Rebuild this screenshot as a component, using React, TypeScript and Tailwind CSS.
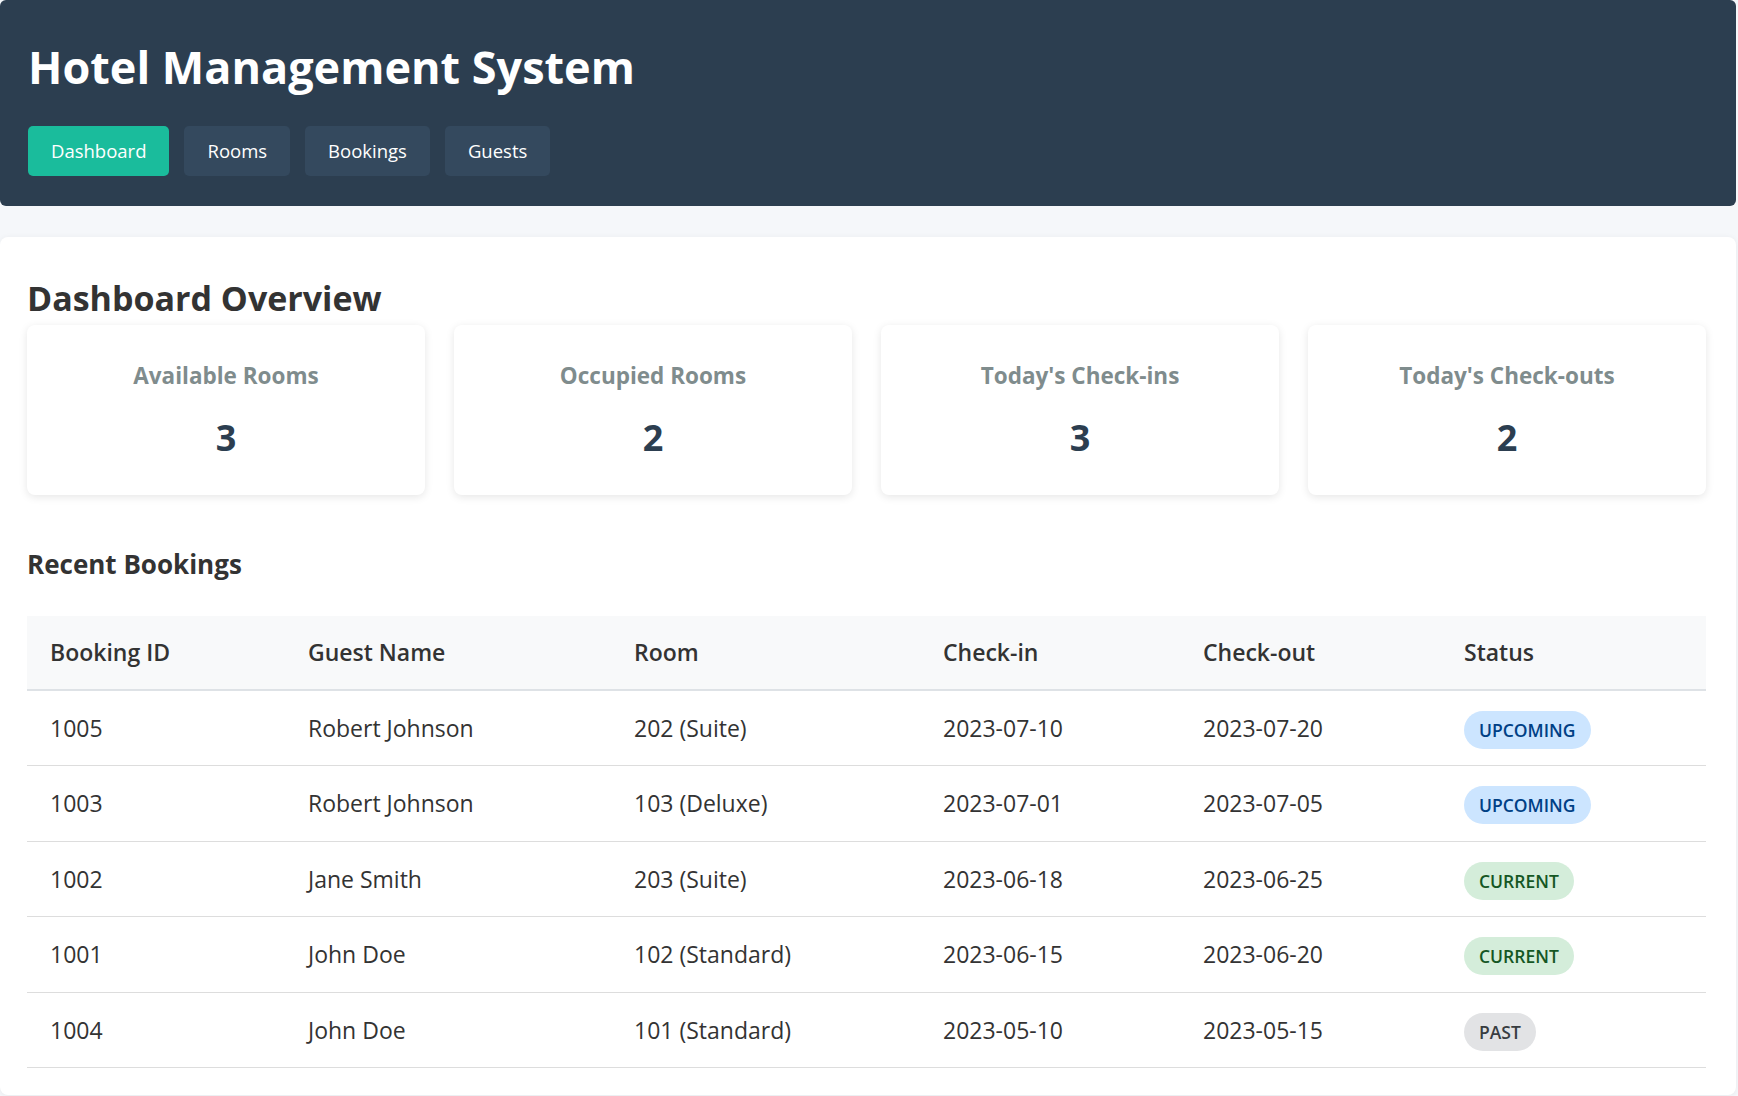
import React from "react";

const tabs = ["Dashboard", "Rooms", "Bookings", "Guests"];

const stats = [
  { label: "Available Rooms", value: 3 },
  { label: "Occupied Rooms", value: 2 },
  { label: "Today's Check-ins", value: 3 },
  { label: "Today's Check-outs", value: 2 },
];

type Status = "upcoming" | "current" | "past";

const bookings: {
  id: number;
  guest: string;
  room: string;
  checkIn: string;
  checkOut: string;
  status: Status;
}[] = [
  { id: 1005, guest: "Robert Johnson", room: "202 (Suite)", checkIn: "2023-07-10", checkOut: "2023-07-20", status: "upcoming" },
  { id: 1003, guest: "Robert Johnson", room: "103 (Deluxe)", checkIn: "2023-07-01", checkOut: "2023-07-05", status: "upcoming" },
  { id: 1002, guest: "Jane Smith", room: "203 (Suite)", checkIn: "2023-06-18", checkOut: "2023-06-25", status: "current" },
  { id: 1001, guest: "John Doe", room: "102 (Standard)", checkIn: "2023-06-15", checkOut: "2023-06-20", status: "current" },
  { id: 1004, guest: "John Doe", room: "101 (Standard)", checkIn: "2023-05-10", checkOut: "2023-05-15", status: "past" },
];

const badgeStyles: Record<Status, string> = {
  upcoming: "bg-[#cce5ff] text-[#004085]",
  current: "bg-[#d4edda] text-[#155724]",
  past: "bg-[#e2e3e5] text-[#383d41]",
};

const columns = [
  { title: "Booking ID", width: "w-[258px]" },
  { title: "Guest Name", width: "w-[326px]" },
  { title: "Room", width: "w-[309px]" },
  { title: "Check-in", width: "w-[260px]" },
  { title: "Check-out", width: "w-[261px]" },
  { title: "Status", width: "" },
];

function StatusBadge({ status }: { status: Status }) {
  return (
    <span
      className={`mt-[4px] inline-flex h-[38px] items-center rounded-full px-[15px] text-[17.5px] font-semibold uppercase ${badgeStyles[status]}`}
    >
      {status}
    </span>
  );
}

export default function App() {
  return (
    <div
      className="min-h-screen bg-[#f5f7fa] pr-[2px] text-[#333]"
      style={{ fontFamily: '"Open Sans", "Noto Sans", sans-serif' }}
    >
      <header className="rounded-md bg-[#2c3e50] px-[28px] pt-[39px] pb-[30px] text-white">
        <h1 className="text-[45px] font-bold leading-[56px]">Hotel Management System</h1>
        <nav className="mt-[31px] flex gap-[15px]">
          {tabs.map((tab, i) => (
            <button
              key={tab}
              className={`flex h-[50px] items-center rounded-[5px] px-[23px] text-[18.5px] text-white ${
                i === 0 ? "bg-[#1abc9c]" : "bg-[#34495e]"
              }`}
            >
              {tab}
            </button>
          ))}
        </nav>
      </header>

      <main className="mt-[31px] rounded-lg bg-white pt-[39px] pb-[27px] pl-[27px] pr-[30px] shadow-[0_1px_6px_rgba(0,0,0,0.06)]">
        <h2 className="mb-[5px] text-[34px] font-bold leading-[44px]">Dashboard Overview</h2>

        <div className="grid grid-cols-4 gap-[29px]">
          {stats.map((s) => (
            <div
              key={s.label}
              className="flex h-[170px] flex-col items-center rounded-lg bg-white pt-[37px] shadow-[0_2px_8px_rgba(0,0,0,0.1)]"
            >
              <h3 className="text-[22.5px] font-bold leading-[28px] text-[#7f8c8d]">{s.label}</h3>
              <p className="mt-[26px] text-[36px] font-bold leading-[44px] text-[#2c3e50]">{s.value}</p>
            </div>
          ))}
        </div>

        <h3 className="mt-[52px] mb-[35px] text-[26px] font-bold leading-[34px]">Recent Bookings</h3>

        <table className="w-full table-fixed border-collapse text-left text-[23px]">
          <thead>
            <tr className="h-[74px] border-b-2 border-[#dee2e6] bg-[#f8f9fa]">
              {columns.map((c) => (
                <th key={c.title} className={`${c.width} px-[23px] font-semibold`}>
                  {c.title}
                </th>
              ))}
            </tr>
          </thead>
          <tbody>
            {bookings.map((b) => (
              <tr key={b.id} className="h-[75.5px] border-b border-[#dddddd]">
                <td className="px-[23px]">{b.id}</td>
                <td className="px-[23px]">{b.guest}</td>
                <td className="px-[23px]">{b.room}</td>
                <td className="px-[23px]">{b.checkIn}</td>
                <td className="px-[23px]">{b.checkOut}</td>
                <td className="px-[23px]">
                  <StatusBadge status={b.status} />
                </td>
              </tr>
            ))}
          </tbody>
        </table>
      </main>
    </div>
  );
}
